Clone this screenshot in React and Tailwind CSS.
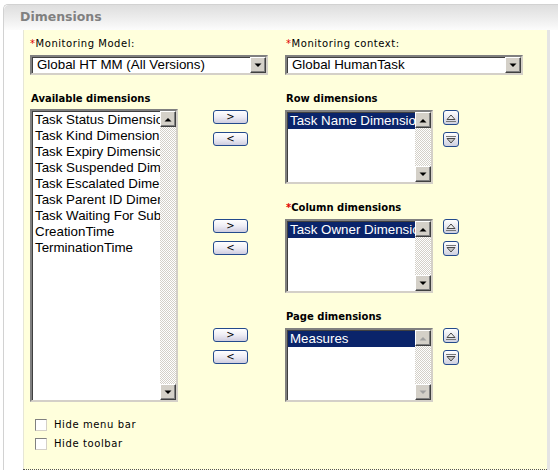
import React from 'react';

const verdana = { fontFamily: '"DejaVu Sans", Verdana, sans-serif' };

function ScrollArrow({ dir, disabled }) {
  const fill = disabled ? '#a0a0a0' : '#000';
  return (
    <div className="w-[16px] h-[16px] bg-[#d4d0c8] border border-t-white border-l-white border-r-[#404040] border-b-[#404040] shadow-[inset_-1px_-1px_0_#808080] flex items-center justify-center">
      <svg width="8" height="5" viewBox="0 0 8 5">
        {dir === 'up' ? (
          <polygon points="0.5,4.5 4,1 7.5,4.5" fill={fill} />
        ) : (
          <polygon points="0.5,0.5 7.5,0.5 4,4" fill={fill} />
        )}
        {disabled && dir === 'up' && null}
      </svg>
    </div>
  );
}

function Select({ value }) {
  return (
    <div className="w-[238px] h-[20px] bg-white border-2 border-t-[#808080] border-l-[#808080] border-r-[#d4d0c8] border-b-[#d4d0c8] shadow-[inset_1px_1px_0_#404040] flex items-center">
      <span
        className="flex-1 pl-[5px] text-[13.33px] leading-[16px] text-black whitespace-nowrap overflow-hidden"
        style={{ fontFamily: '"Liberation Sans", Arial, sans-serif' }}
      >
        {value}
      </span>
      <ScrollArrow dir="down" />
    </div>
  );
}

function ListBox({ items, selected, height, disabled }) {
  return (
    <div
      className="w-[148px] bg-white border-2 border-t-[#808080] border-l-[#808080] border-r-[#d4d0c8] border-b-[#d4d0c8] shadow-[inset_1px_1px_0_#404040] flex"
      style={{ height }}
    >
      <div
        className="flex-1 min-w-0 pt-[1px] pl-[1px] overflow-hidden text-[13.33px] leading-[16px]"
        style={{ fontFamily: '"Liberation Sans", Arial, sans-serif' }}
      >
        {items.map((it, i) => (
          <div
            key={it}
            className={
              'pl-[2px] whitespace-nowrap overflow-hidden ' +
              (selected && i === 0 ? 'bg-[#0a246a] text-white' : 'text-black')
            }
          >
            {it}
          </div>
        ))}
      </div>
      <div className="w-[16px] flex flex-col justify-between bg-[repeating-conic-gradient(#d4d0c8_0%_25%,#ffffff_0%_50%)] bg-[length:2px_2px]">
        <ScrollArrow dir="up" disabled={disabled} />
        <ScrollArrow dir="down" disabled={disabled} />
      </div>
    </div>
  );
}

function MoveButton({ label }) {
  return (
    <button
      className="w-[35px] h-[14px] rounded-[3px] border border-[#234a8c] bg-gradient-to-b from-white via-[#eeedf5] to-[#cfcde0] flex items-center justify-center text-[10px] leading-none text-black"
      style={verdana}
    >
      {label}
    </button>
  );
}

function OrderButton({ dir }) {
  return (
    <button className="w-[16px] h-[15px] rounded-[3px] border border-[#234a8c] bg-gradient-to-b from-white to-[#cfd0e0] flex items-center justify-center">
      <svg width="12" height="10" viewBox="0 0 12 10">
        {dir === 'up' ? (
          <>
            <polygon points="2,6.5 6,2 10,6.5" fill="#ececec" stroke="#4a4a4a" strokeWidth="1" />
            <line x1="1" y1="8.5" x2="11" y2="8.5" stroke="#777" strokeWidth="1" />
          </>
        ) : (
          <>
            <line x1="1" y1="1.5" x2="11" y2="1.5" stroke="#777" strokeWidth="1" />
            <polygon points="2,3.5 10,3.5 6,8" fill="#c4c4c4" stroke="#4a4a4a" strokeWidth="1" />
          </>
        )}
      </svg>
    </button>
  );
}

function Label({ children, required, bold }) {
  return (
    <div
      className={
        'text-[10px] leading-[12px] text-black whitespace-nowrap ' +
        (bold ? 'font-bold' : 'tracking-[0.55px]')
      }
      style={verdana}
    >
      {required && <span className="text-[#e00000]">*</span>}
      {children}
    </div>
  );
}

function DimBlock({ label, required, items, disabled, last }) {
  return (
    <div className={last ? '' : 'mb-[18px]'}>
      <div className="h-[17px] pl-[73px]">
        <Label bold required={required}>
          {label}
        </Label>
      </div>
      <div className="flex">
        <div className="w-[35px] mr-[37px] flex flex-col gap-[8px]">
          <MoveButton label=">" />
          <MoveButton label="<" />
        </div>
        <ListBox items={items} selected height={74} disabled={disabled} />
        <div className="ml-[10px] flex flex-col gap-[7px]">
          <OrderButton dir="up" />
          <OrderButton dir="down" />
        </div>
      </div>
    </div>
  );
}

function CheckRow({ label }) {
  return (
    <div className="h-[19px] flex items-center pl-[5px]">
      <div className="w-[12px] h-[12px] bg-white border border-t-[#808080] border-l-[#808080] border-r-[#d4d0c8] border-b-[#d4d0c8]" />
      <span
        className="ml-[7px] text-[10px] leading-[12px] tracking-[0.6px] text-black"
        style={verdana}
      >
        {label}
      </span>
    </div>
  );
}

export default function App() {
  const available = [
    'Task Status Dimension',
    'Task Kind Dimension',
    'Task Expiry Dimension',
    'Task Suspended Dimension',
    'Task Escalated Dimension',
    'Task Parent ID Dimension',
    'Task Waiting For Sub',
    'CreationTime',
    'TerminationTime',
  ];

  return (
    <div className="w-[558px] h-[475px] bg-white overflow-hidden">
      <div className="ml-[3px] mt-[4px] border-l border-t border-[#d2d2d2] rounded-tl-[5px]">
        <div className="h-[25px] pl-[16px] flex items-center bg-gradient-to-b from-[#dedede] via-[#ececec] to-[#fcfcfc] rounded-tl-[5px]">
          <span className="text-[12.5px] font-bold text-[#808080]" style={verdana}>
            Dimensions
          </span>
        </div>
        <div className="pl-[19px]">
          <div className="w-[524px] bg-[#ffffdc] border-b border-dotted border-[#555] shadow-[3px_0_0_#e4e4e4,inset_1px_0_0_#e6e6d6] pt-[8px] pl-[7px] pb-[16px]">
            <div className="flex">
              <div className="w-[255px]">
                <div className="h-[17px]">
                  <Label required>Monitoring Model:</Label>
                </div>
                <Select value="Global HT MM (All Versions)" />
              </div>
              <div>
                <div className="h-[17px] pl-[1px]">
                  <Label required>Monitoring context:</Label>
                </div>
                <Select value="Global HumanTask" />
              </div>
            </div>

            <div className="flex mt-[18px]">
              <div className="w-[183px]">
                <div className="h-[16px] pl-[1px]">
                  <Label bold>Available dimensions</Label>
                </div>
                <ListBox items={available} height={293} />
              </div>
              <div>
                <DimBlock label="Row dimensions" items={['Task Name Dimension']} />
                <DimBlock label="Column dimensions" required items={['Task Owner Dimension']} />
                <DimBlock label="Page dimensions" items={['Measures']} disabled last />
              </div>
            </div>

            <div className="mt-[13px]">
              <CheckRow label="Hide menu bar" />
              <CheckRow label="Hide toolbar" />
            </div>
          </div>
        </div>
      </div>
    </div>
  );
}
